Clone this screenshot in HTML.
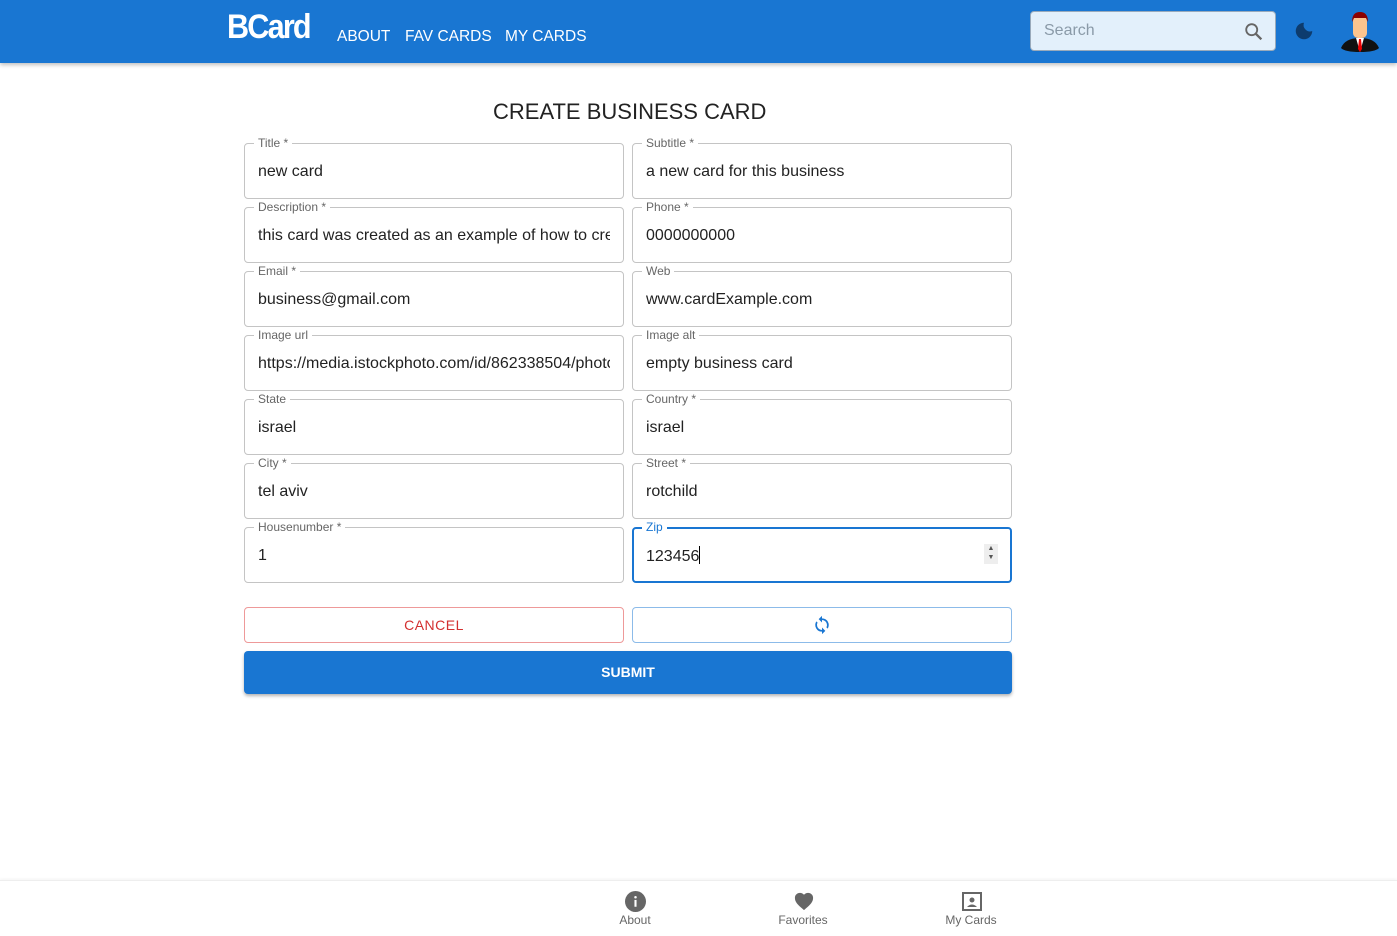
<!DOCTYPE html>
<html><head><meta charset="utf-8"><style>
*{box-sizing:border-box;margin:0;padding:0}
body{width:1397px;height:936px;overflow:hidden;background:#fff;font-family:"Liberation Sans",sans-serif;position:relative}
.hdr{position:absolute;left:0;top:0;width:1397px;height:63px;background:#1976d2;box-shadow:0 2px 4px rgba(0,0,0,.25)}
.logo{position:absolute;left:227px;top:8px;color:#fff;font-size:34px;font-weight:bold;letter-spacing:-2px;transform:scaleX(0.9);transform-origin:left}
.nav{position:absolute;top:28px;color:#fff;font-size:15.5px}
.search{position:absolute;left:1030px;top:11px;width:246px;height:40px;background:#e3f0fb;border:1px solid #9ab;border-radius:4px}
.search span{position:absolute;left:13px;top:10px;color:#8a9aa8;font-size:16px}
.f{position:absolute;width:380px;height:56px;border:1px solid #c4c4c4;border-radius:4px}
.f label{position:absolute;left:9px;top:-8px;background:#fff;padding:0 4px;font-size:12px;color:#666;line-height:14px}
.f span{position:absolute;left:13px;top:19px;font-size:16px;color:#222;white-space:nowrap;overflow:hidden;width:352px}
.bn{position:absolute;top:880px;left:0;width:1397px;height:56px;border-top:1px solid #eee;box-shadow:0 -1px 3px rgba(0,0,0,.05)}
.bi{position:absolute;top:32px;font-size:12px;color:#666;width:100px;text-align:center;margin-left:-50px}
</style></head><body>
<div class="hdr">
<div class="logo">BCard</div>
<div class="nav" style="left:337px">ABOUT</div>
<div class="nav" style="left:405px">FAV CARDS</div>
<div class="nav" style="left:505px">MY CARDS</div>
<div class="search"><span>Search</span>
<svg style="position:absolute;left:212px;top:9px" width="22" height="22" viewBox="0 0 24 24"><circle cx="9.5" cy="9.5" r="6" fill="none" stroke="#666" stroke-width="2"/><path d="M14 14l6 6" stroke="#666" stroke-width="2.5"/></svg></div>
<svg style="position:absolute;left:1293px;top:20px" width="22" height="22" viewBox="0 0 24 24"><path d="M12 3a9 9 0 1 0 9 9 7 7 0 0 1-9-9z" fill="#0d3c6e"/></svg>
<svg style="position:absolute;left:1341px;top:10px" width="38" height="42" viewBox="0 0 38 42"><path d="M0 38q4-10 19-10t19 10q-4 4-19 4t-19-4z" fill="#111"/><rect x="12" y="6" width="14" height="22" rx="5" fill="#fcc48e"/><path d="M11 12q0-10 8-10t8 10l-2-4h-12z" fill="#8b0000"/><path d="M15 28h8l-4 14z" fill="#fff"/><path d="M18 29h2l1 10-2 3-2-3z" fill="#e00"/></svg>
</div>
<div style="position:absolute;left:493px;top:99px;font-size:22px;color:#222">CREATE BUSINESS CARD</div>

<div class="f" style="left:244px;top:143px"><label>Title *</label><span>new card</span></div>
<div class="f" style="left:632px;top:143px"><label>Subtitle *</label><span>a new card for this business</span></div>
<div class="f" style="left:244px;top:207px"><label>Description *</label><span>this card was created as an example of how to create</span></div>
<div class="f" style="left:632px;top:207px"><label>Phone *</label><span>0000000000</span></div>
<div class="f" style="left:244px;top:271px"><label>Email *</label><span>business@gmail.com</span></div>
<div class="f" style="left:632px;top:271px"><label>Web</label><span>www.cardExample.com</span></div>
<div class="f" style="left:244px;top:335px"><label>Image url</label><span>https://media.istockphoto.com/id/862338504/photo</span></div>
<div class="f" style="left:632px;top:335px"><label>Image alt</label><span>empty business card</span></div>
<div class="f" style="left:244px;top:399px"><label>State</label><span>israel</span></div>
<div class="f" style="left:632px;top:399px"><label>Country *</label><span>israel</span></div>
<div class="f" style="left:244px;top:463px"><label>City *</label><span>tel aviv</span></div>
<div class="f" style="left:632px;top:463px"><label>Street *</label><span>rotchild</span></div>
<div class="f" style="left:244px;top:527px"><label>Housenumber *</label><span>1</span></div>
<div class="f" style="left:632px;top:527px;border:2px solid #1976d2"><label style="color:#1976d2;left:8px;top:-9px">Zip</label><span style="left:12px;top:17px">123456<span style="display:inline-block;width:1px;height:18px;background:#000;vertical-align:-3px;position:static"></span></span>
<div style="position:absolute;left:350px;top:15px;width:14px;height:20px;background:#eee;font-size:7px;color:#555;text-align:center;line-height:9px">▲<br>▼</div></div>

<div style="position:absolute;left:244px;top:607px;width:380px;height:36px;border:1px solid #e99;border-radius:4px;color:#d32f2f;font-size:14px;text-align:center;line-height:34px;letter-spacing:.5px">CANCEL</div>
<div style="position:absolute;left:632px;top:607px;width:380px;height:36px;border:1px solid #8cbbe9;border-radius:4px">
<svg style="position:absolute;left:179px;top:7px" width="20" height="20" viewBox="0 0 24 24"><path d="M12 4V1L8 5l4 4V6a6 6 0 0 1 6 6 6 6 0 0 1-.7 2.8l1.5 1.5A8 8 0 0 0 12 4zm0 14a6 6 0 0 1-6-6 6 6 0 0 1 .7-2.8L5.2 7.7A8 8 0 0 0 12 20v3l4-4-4-4z" fill="#1976d2"/></svg></div>
<div style="position:absolute;left:244px;top:651px;width:768px;height:43px;background:#1976d2;border-radius:4px;color:#fff;font-size:14px;font-weight:bold;text-align:center;line-height:43px;box-shadow:0 2px 3px rgba(0,0,0,.3)">SUBMIT</div>

<div class="bn">
<svg style="position:absolute;left:625px;top:10px" width="21" height="21" viewBox="0 0 20 20"><circle cx="10" cy="10" r="10" fill="#666"/><rect x="9" y="8.5" width="2" height="6.5" fill="#fff"/><circle cx="10" cy="6" r="1.2" fill="#fff"/></svg>
<svg style="position:absolute;left:793px;top:10px" width="22" height="20" viewBox="0 0 24 22"><path d="M12 21l-1.5-1.3C5 15 2 12 2 7.5 2 4.4 4.4 2 7.5 2c1.8 0 3.4.8 4.5 2.1C13.1 2.8 14.7 2 16.5 2 19.6 2 22 4.4 22 7.5c0 4.5-3 7.5-8.5 12.2z" fill="#666"/></svg>
<svg style="position:absolute;left:962px;top:11px" width="20" height="19" viewBox="0 0 20 19"><rect x="1" y="1" width="18" height="17" fill="none" stroke="#666" stroke-width="2"/><circle cx="10" cy="8" r="2.5" fill="#666"/><path d="M5 15q5-5 10 0z" fill="#666"/></svg>
<div class="bi" style="left:635px">About</div>
<div class="bi" style="left:803px">Favorites</div>
<div class="bi" style="left:971px">My Cards</div>
</div>
</body></html>
